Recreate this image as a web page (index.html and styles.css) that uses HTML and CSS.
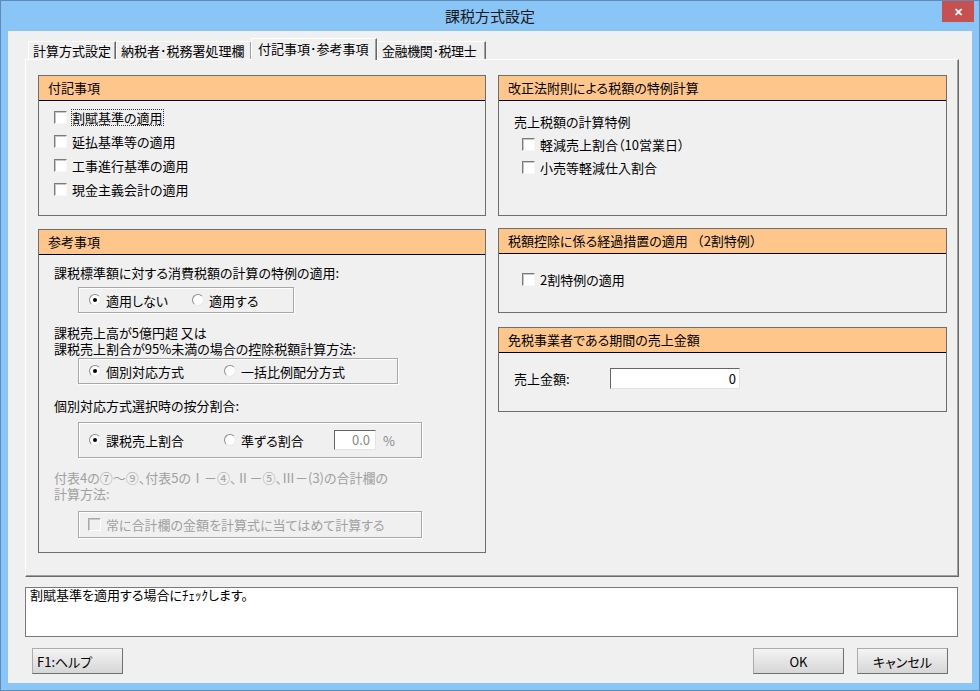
FILE: index.html
```html
<!DOCTYPE html>
<html>
  <head>
    <meta charset="utf-8">
    <title>課税方式設定</title>
    <link rel="stylesheet" href="styles.css">
  </head>
  <body>
    <div class="window">
      <div class="titlebar">
        <span class="title">課税方式設定</span>
        <span class="close">&#x2715;</span>
      </div>
      <div class="client">
        <div class="tabs">
          <span class="tab tab-keisan">計算方式設定</span>
          <span class="tab tab-nouzei">納税者･税務署処理欄</span>
          <span class="tab tab-fuki active">付記事項･参考事項</span>
          <span class="tab tab-kinyu">金融機関･税理士</span>
        </div>
        <div class="panel">
          <div class="col">
            <div class="group g-fuki">
              <div class="group-head">付記事項</div>
              <div class="group-body">
                <div class="row"><span class="check"></span><span class="label focus">割賦基準の適用</span></div>
                <div class="row"><span class="check"></span><span class="label">延払基準等の適用</span></div>
                <div class="row"><span class="check"></span><span class="label">工事進行基準の適用</span></div>
                <div class="row"><span class="check"></span><span class="label">現金主義会計の適用</span></div>
              </div>
            </div>
            <div class="group g-sanko">
              <div class="group-head">参考事項</div>
              <div class="group-body">
                <div class="text t1">課税標準額に対する消費税額の計算の特例の適用:</div>
                <div class="optbox box1">
                  <span class="opt w-short"><span class="radio on"></span>適用しない</span>
                  <span class="opt"><span class="radio"></span>適用する</span>
                </div>
                <div class="text t2">課税売上高が5億円超 又は<br>課税売上割合が95%未満の場合の控除税額計算方法:</div>
                <div class="optbox box2">
                  <span class="opt w-long"><span class="radio on"></span>個別対応方式</span>
                  <span class="opt"><span class="radio"></span>一括比例配分方式</span>
                </div>
                <div class="text t3">個別対応方式選択時の按分割合:</div>
                <div class="optbox box3">
                  <span class="opt w-long"><span class="radio on"></span>課税売上割合</span>
                  <span class="opt w-mid"><span class="radio"></span>準ずる割合</span>
                  <span class="num small">0.0</span>
                  <span class="pct">%</span>
                </div>
                <div class="text t4 disabled">付表4の⑦～⑨、付表5のⅠ－④、Ⅱ－⑤、Ⅲ－(3)の合計欄の<br>計算方法:</div>
                <div class="optbox box4">
                  <span class="check off"></span><span class="label disabled">常に合計欄の金額を計算式に当てはめて計算する</span>
                </div>
              </div>
            </div>
          </div>
          <div class="col">
            <div class="group g-kaisei">
              <div class="group-head">改正法附則による税額の特例計算</div>
              <div class="group-body">
                <div class="text">売上税額の計算特例</div>
                <div class="sub">
                  <div class="row slim"><span class="check"></span><span class="label">軽減売上割合（10営業日）</span></div>
                  <div class="row slim"><span class="check"></span><span class="label">小売等軽減仕入割合</span></div>
                </div>
              </div>
            </div>
            <div class="group g-niwari">
              <div class="group-head">税額控除に係る経過措置の適用 <span class="wide-paren">（2割特例）</span></div>
              <div class="group-body">
                <div class="row sub"><span class="check"></span><span class="label">2割特例の適用</span></div>
              </div>
            </div>
            <div class="group g-menzei">
              <div class="group-head">免税事業者である期間の売上金額</div>
              <div class="group-body">
                <div class="field">
                  <span class="field-label">売上金額:</span>
                  <span class="num wide">0</span>
                </div>
              </div>
            </div>
          </div>
        </div>
        <div class="message">割賦基準を適用する場合にﾁｪｯｸします。</div>
        <div class="buttons">
          <button class="button help">F1:ヘルプ</button>
          <span class="spacer"></span>
          <button class="button">OK</button>
          <button class="button cancel">キャンセル</button>
        </div>
      </div>
    </div>
  </body>
</html>
```
FILE: styles.css
```css
body {
  margin: 0;
  padding: 0;
  font-family: "Noto Sans CJK JP", "Noto Sans", sans-serif;
  font-size: 13px;
  font-feature-settings: "palt";
  color: #000;
}

.window {
  width: 980px;
  height: 691px;
  box-sizing: border-box;
  border: 1px solid #5d8ab6;
  background-color: #89c5f7;
  padding: 0 7px 7px 7px;
  display: flex;
  flex-direction: column;
}

.titlebar {
  height: 30px;
  margin: 0 -7px;
  display: flex;
  align-items: flex-start;
}

.title {
  flex: 1;
  text-align: center;
  padding-left: 37px;
  font-size: 15px;
  line-height: 30px;
  color: #1a1a1a;
}

.close {
  width: 32px;
  height: 21px;
  margin-right: 5px;
  background-color: #c75050;
  color: #fff;
  font-size: 11px;
  font-weight: bold;
  line-height: 21px;
  text-align: center;
}

.client {
  flex: 1;
  background-color: #f0f0f0;
  padding: 8px 13px 0 17px;
}

/* tab strip */
.tabs {
  display: flex;
  align-items: flex-end;
  height: 20px;
  padding-left: 3px;
}

.tab {
  box-sizing: border-box;
  height: 18px;
  line-height: 17px;
  padding: 0 0 0 4px;
  border-top: 1px solid #fff;
  border-left: 1px solid #fff;
  border-right: 1px solid #696969;
  box-shadow: inset -1px 0 0 #a0a0a0;
  white-space: nowrap;
  overflow: hidden;
}

.tab-keisan { width: 88px; }
.tab-nouzei { width: 136px; }
.tab-fuki { width: 126px; }
.tab-kinyu { width: 109px; letter-spacing: -0.4px; }

.tab.active {
  height: 22px;
  line-height: 19px;
  margin-bottom: -1px;
  margin-left: -1px;
  padding-left: 6px;
  background-color: #f0f0f0;
  position: relative;
}

.panel {
  height: 518px;
  box-sizing: border-box;
  border-top: 1px solid #fff;
  border-left: 1px solid #fff;
  border-right: 1px solid #696969;
  border-bottom: 1px solid #696969;
  box-shadow: inset -1px -1px 0 #a0a0a0;
  padding: 15px 0 0 12px;
  display: flex;
  gap: 12px;
}

.col {
  width: 448px;
}

.col + .col {
  width: 449px;
}

/* group boxes */
.group {
  box-sizing: border-box;
  border: 1px solid #6e6e6e;
}

.group-head {
  height: 24px;
  line-height: 24px;
  padding-left: 9px;
  background-color: #ffc68c;
  border-bottom: 1px solid #000;
}

.wide-paren {
  font-feature-settings: normal;
}

.group-body {
  padding-left: 15px;
}

.g-fuki { height: 141px; }
.g-fuki .group-body { padding-top: 4px; }

.g-sanko { height: 324px; margin-top: 13px; }
.g-sanko .group-body { padding-top: 10px; }

.g-kaisei { height: 141px; }
.g-kaisei .group-body { padding-top: 13px; }

.g-niwari { height: 85px; margin-top: 12px; }
.g-niwari .group-body { padding-top: 13px; }

.g-menzei { height: 85px; margin-top: 14px; }
.g-menzei .group-body { padding-top: 15px; }

.row {
  height: 24px;
  display: flex;
  align-items: center;
}

.row.slim {
  height: 23px;
}

.sub {
  margin-left: 8px;
}

.g-kaisei .sub {
  margin-top: 3px;
}

.label {
  margin-left: 5px;
  line-height: 15px;
}

.focus {
  outline: 1px dotted #333;
}

.text {
  line-height: 16px;
}

.t2, .t4 {
  margin-top: 12px;
}

.t3 {
  margin-top: 14px;
}

.disabled {
  color: #a0a0a0;
}

/* checkbox and radio */
.check {
  width: 11px;
  height: 11px;
  background-color: #fff;
  border: 1px solid;
  border-color: #7a7a7a #f8f8f8 #f8f8f8 #7a7a7a;
  box-shadow: inset 1px 1px 0 #c8c8c8;
  flex-shrink: 0;
}

.check.off {
  background-color: #f0f0f0;
  border-color: #a8a8a8 #fff #fff #a8a8a8;
}

.radio {
  width: 10px;
  height: 10px;
  border-radius: 50%;
  border: 1px solid;
  border-color: #8c8c8c #e8e8e8 #e8e8e8 #8c8c8c;
  background-color: #fff;
  margin-right: 5px;
  display: inline-flex;
  align-items: center;
  justify-content: center;
  flex-shrink: 0;
}

.radio.on::after {
  content: "";
  width: 4px;
  height: 4px;
  border-radius: 50%;
  background-color: #000;
}

/* option frames */
.optbox {
  box-sizing: border-box;
  border: 1px solid #a8a8a8;
  box-shadow: inset 1px 1px 0 #fff, 1px 1px 0 #fff;
  margin-left: 24px;
  padding-left: 10px;
  display: flex;
  align-items: center;
}

.box1 { width: 216px; height: 26px; margin-top: 6px; }
.box2 { width: 320px; height: 26px; margin-top: 1px; }
.box3 { width: 344px; height: 36px; margin-top: 8px; }
.box4 { width: 344px; height: 27px; margin-top: 9px; padding-left: 9px; }

.opt {
  display: flex;
  align-items: center;
}

.w-short { width: 103px; }
.w-long { width: 135px; }
.w-mid { width: 110px; }

.num {
  box-sizing: border-box;
  height: 20px;
  line-height: 18px;
  background-color: #fff;
  border: 1px solid;
  border-color: #646464 #e3e3e3 #e3e3e3 #646464;
  text-align: right;
  padding-right: 5px;
}

.num.small {
  width: 42px;
  color: #8a8a8a;
}

.num.wide {
  width: 130px;
  height: 21px;
  line-height: 19px;
  padding-right: 3px;
}

.pct {
  margin-left: 7px;
  color: #8a8a8a;
}

.field {
  display: flex;
  align-items: center;
}

.field-label {
  width: 96px;
}

/* bottom part */
.message {
  box-sizing: border-box;
  width: 933px;
  height: 50px;
  margin-top: 10px;
  background-color: #fff;
  border: 1px solid #7a7a7a;
  padding: 0 4px;
  line-height: 14px;
}

.buttons {
  display: flex;
  margin-top: 11px;
  width: 933px;
}

.spacer {
  flex: 1;
}

.button {
  box-sizing: border-box;
  width: 91px;
  height: 26px;
  font-family: inherit;
  font-size: 13px;
  font-feature-settings: "palt";
  background: linear-gradient(#f4f4f4, #d6d6d6);
  border: 1px solid #acacac;
  border-right-color: #707070;
  border-bottom-color: #707070;
  padding: 0;
}

.button.help {
  margin-left: 7px;
  text-align: left;
  padding-left: 4px;
}

.button.cancel {
  margin-left: 13px;
  margin-right: 10px;
}
```
